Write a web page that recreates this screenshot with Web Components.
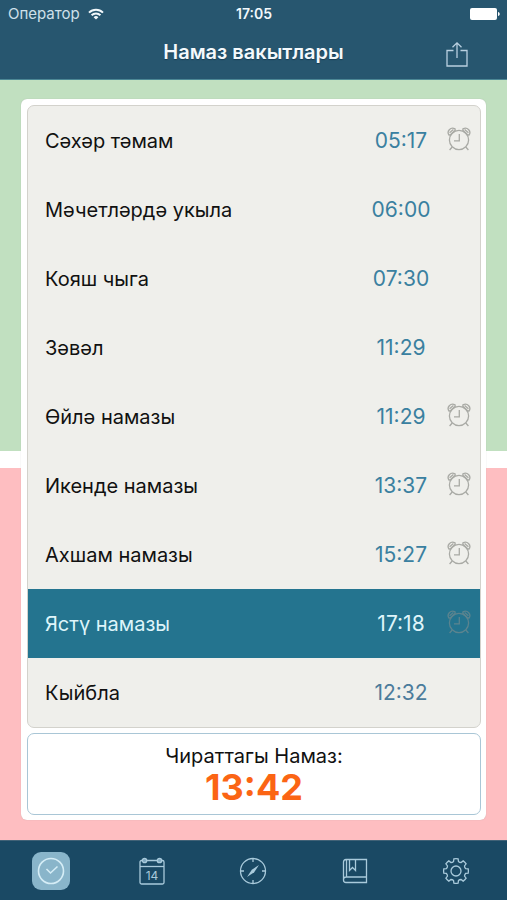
<!DOCTYPE html>
<html lang="tt">
<head>
<meta charset="utf-8">
<meta name="viewport" content="width=device-width, initial-scale=1">
<title>Намаз вакытлары</title>
<style>
  body { margin: 0; font-family: Inter, "Liberation Sans", sans-serif; color: #111; }
</style>
</head>
<body>
<prayer-app>
  <status-bar slot="top" carrier="Оператор" time="17:05"></status-bar>
  <nav-header slot="top">Намаз вакытлары</nav-header>
  <time-list>
    <time-row time="05:17" alarm>Сәхәр тәмам</time-row>
    <time-row time="06:00">Мәчетләрдә укыла</time-row>
    <time-row time="07:30">Кояш чыга</time-row>
    <time-row time="11:29">Зәвәл</time-row>
    <time-row time="11:29" alarm>Өйлә намазы</time-row>
    <time-row time="13:37" alarm>Икенде намазы</time-row>
    <time-row time="15:27" alarm>Ахшам намазы</time-row>
    <time-row time="17:18" alarm current>Ястү намазы</time-row>
    <time-row time="12:32" muted>Кыйбла</time-row>
  </time-list>
  <next-prayer time="13:42">Чираттагы Намаз:</next-prayer>
  <tab-bar slot="bottom"></tab-bar>
</prayer-app>

<script>
class BaseElement extends HTMLElement {
  connectedCallback() {
    if (this.shadowRoot) return;
    this.attachShadow({ mode: "open" }).innerHTML =
      `<style>:host,*{box-sizing:border-box}${this.css()}</style>${this.html()}`;
  }
}

customElements.define("prayer-app", class extends BaseElement {
  css() { return `
    :host { display: flex; flex-direction: column; min-height: 100vh; }
    main {
      flex: 1; padding: 19px 21px 20px;
      background: linear-gradient(#c1e0c0 calc(50% - 9px), #fff 0 calc(50% + 8px), #febec1 0);
    }
    .card {
      display: flex; flex-direction: column; gap: 5px;
      padding: 6px 5px 5px 6px; background: #fff; border-radius: 6px;
      box-shadow: 0 0 1px #8888;
    }`; }
  html() { return `<slot name="top"></slot><main><div class="card"><slot></slot></div></main><slot name="bottom"></slot>`; }
});

customElements.define("status-bar", class extends BaseElement {
  css() { return `
    :host {
      display: grid; grid-template-columns: 1fr auto 1fr; align-items: center;
      height: 28px; padding: 0 7px 0 8px; background: #27566f;
      color: #f2f8fb; font-size: 15px; line-height: 20px;
    }
    .carrier { display: flex; align-items: center; gap: 8px; color: #cfe0ea; }
    .clock { font-weight: 600; font-size: 14px; }
    .battery { justify-self: end; }
    svg { display: block; }`; }
  html() { return `
    <span class="carrier">${this.getAttribute("carrier")}
      <svg width="16" height="12" viewBox="0 0 16 12" fill="none" stroke="#f2f8fb" stroke-width="2">
        <path d="M1 4.6a10 10 0 0 1 14 0M3.6 7.3a6.2 6.2 0 0 1 8.8 0"/>
        <path d="M8 11.6 5.6 9.2a3.4 3.4 0 0 1 4.8 0z" fill="#f2f8fb" stroke="none"/>
      </svg></span>
    <span class="clock">${this.getAttribute("time")}</span>
    <svg class="battery" width="30" height="12" viewBox="0 0 30 12" fill="#fff">
      <rect width="27" height="12" rx="2"/><path d="M28 4c2.300 .5 2.300 3.500 0 4z"/>
    </svg>`; }
});

customElements.define("nav-header", class extends BaseElement {
  css() { return `
    :host {
      display: grid; grid-template-columns: 1fr auto 1fr; align-items: center;
      height: 52px; padding: 0 37px; background: #27566f;
      border-bottom: 1px solid #4c8795;
    }
    h1 {
      grid-column: 2; margin: 0 0 3px; font-size: 20px; line-height: 24px; font-weight: 600;
      color: #f4f9fc; text-shadow: 0 1px 1px #0d2c3f99;
    }
    button { justify-self: end; margin: 0; padding: 0; border: 0; background: none; }
    svg { display: block; }`; }
  html() { return `
    <h1><slot></slot></h1>
    <button type="button" aria-label="Share">
      <svg width="26" height="28" viewBox="0 0 26 28" fill="none" stroke="#b9d0e0" stroke-width="1.300">
        <path d="M9.500 10.500H3V26h20V10.500h-6.500M13 18V3M8.500 7.300 13 2.800l4.500 4.500"/>
      </svg>
    </button>`; }
});

customElements.define("time-list", class extends BaseElement {
  css() { return `
    :host {
      display: block; background: #efefeb; border: 1px solid #d3d2cc;
      border-radius: 7px; overflow: hidden;
    }`; }
  html() { return `<div role="list"><slot></slot></div>`; }
});

customElements.define("time-row", class extends BaseElement {
  connectedCallback() { this.setAttribute("role", "listitem"); super.connectedCallback(); }
  css() { return `
    :host {
      display: grid; grid-template-columns: 1fr 74px 42px; align-items: center;
      height: 69px; padding-left: 17px; font-size: 20px; line-height: 28px;
      --time: #3a80a0; --alarm: #a9aaa5;
    }
    :host([muted]) { --time: #4c7c9b; }
    :host([current]) { background: #24748f; color: #def4fa; --time: #def4fa; --alarm: #5c848f; }
    time { text-align: center; font-size: 21px; color: var(--time); }
    button { justify-self: center; margin: 0 0 3px; padding: 0; border: 0; background: none; color: var(--alarm); }
    svg { display: block; }`; }
  html() { return `
    <span><slot></slot></span>
    <time>${this.getAttribute("time")}</time>
    ${this.hasAttribute("alarm") ? `<button type="button" aria-label="Alarm">
      <svg width="24" height="24" viewBox="0 0 24 24" fill="none" stroke="currentColor" stroke-width="1.300">
        <circle cx="12" cy="13" r="9.600"/>
        <path d="M12.300 7v6.800H7"/>
        <path d="M2 8C-.6 4.500 3.400-.4 8 1.800L8.200 3.200 3.200 8zM22 8C24.600 4.500 20.600-.4 16 1.800L15.800 3.200l5 4.800z"/>
        <path d="M2.600 5.800 6.400 2.600M21.400 5.800 17.600 2.600M5.200 20 2.600 23M18.800 20l2.600 3"/>
      </svg></button>` : ""}`; }
});

customElements.define("next-prayer", class extends BaseElement {
  css() { return `
    :host {
      display: flex; flex-direction: column; align-items: center;
      padding: 9px 8px; border: 1px solid #a9c6d6; border-radius: 7px;
      background: #fff; text-align: center;
    }
    span { font-size: 20px; line-height: 26px; }
    time { font-size: 36px; line-height: 36px; font-weight: 700; color: #fb6514; }`; }
  html() { return `<span><slot></slot></span><time>${this.getAttribute("time")}</time>`; }
});

const gear = (() => {
  const pts = [], f = (r, a) => `${(14 + r * Math.cos(a)).toFixed(2)} ${(14 + r * Math.sin(a)).toFixed(2)}`;
  for (let i = 0; i < 8; i++) {
    const a = i * Math.PI / 4;
    pts.push(`${i ? "L" : "M"}${f(9.900, a - .25)}L${f(12.400, a - .17)}A12.400 12.400 0 0 1 ${f(12.400, a + .17)}L${f(9.900, a + .25)}A4 4 0 0 0 ${f(9.900, a + Math.PI / 4 - .25)}`);
  }
  return pts.join("") + "Z";
})();

const tabs = [
  ["Times", `<circle cx="14" cy="14" r="12.500" stroke="#d5edf6" stroke-width="1.600"/><path d="m9.500 12 4 4 7-6.500" stroke="#d5edf6" stroke-width="1.600"/>`],
  ["Calendar", `<rect x="2" y="3.500" width="24" height="23.500" rx="1.500"/><path d="M2 9.500h24"/><circle cx="6.500" cy="3.500" r="2.200" fill="#7fa9c0"/><circle cx="21.500" cy="3.500" r="2.200" fill="#7fa9c0"/><text x="14" y="22.500" text-anchor="middle" font-size="12" fill="#a9cadb" stroke="none">14</text>`],
  ["Compass", `<circle cx="14" cy="14" r="12.500"/><path d="M14 1.500V5M14 23v3.500M1.500 14H5M23 14h3.500"/><path d="m20 8-4.800 7.200L8 20l4.800-7.200z" fill="#a9cadb" stroke="none"/>`],
  ["Book", `<path d="M25.500 2.500H5Q2.500 2.500 2.500 5v18q0 2.500 2.500 2.500h20.500zM25.500 20H5q-2.500 0-2.500 2.500M5.500 2.500V20"/><path d="M8.500 2.500v11l3-3 3 3v-11"/>`],
  ["Settings", `<circle cx="14" cy="14" r="5"/><path d="${gear}"/>`],
];

customElements.define("tab-bar", class extends BaseElement {
  css() { return `
    :host { display: block; background: #1a4964; border-top: 1px solid #416277; }
    nav { display: grid; grid-template-columns: repeat(5, 1fr); height: 59px; align-items: center; justify-items: center; }
    button {
      display: grid; place-items: center; width: 38px; height: 38px;
      margin: 0; padding: 0; border: 0; border-radius: 9px; background: none; font: inherit;
    }
    button[aria-current] { background: #89b5ca; }
    svg { display: block; overflow: visible; }`; }
  html() { return `<nav>${tabs.map(([name, art], i) => `
    <button type="button" aria-label="${name}"${i ? "" : ` aria-current="page"`}>
      <svg width="28" height="28" viewBox="0 0 28 28" fill="none" stroke="#a9cadb" stroke-width="1.300">${art}</svg>
    </button>`).join("")}</nav>`; }
});
</script>
</body>
</html>
